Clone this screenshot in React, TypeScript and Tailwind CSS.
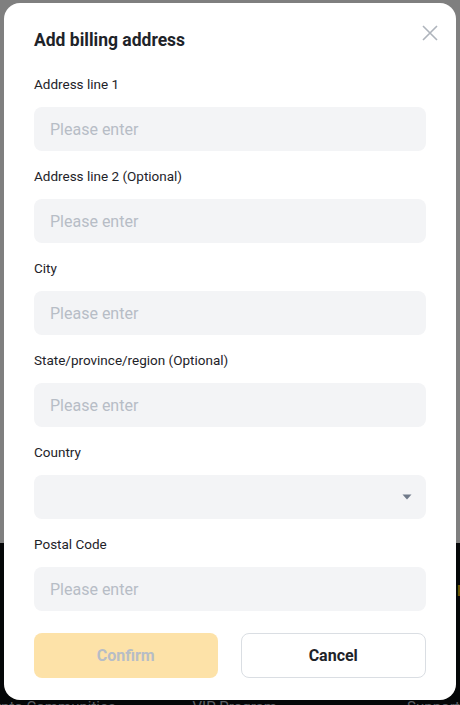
const fields = [
  { label: "Address line 1" },
  { label: "Address line 2 (Optional)" },
  { label: "City" },
  { label: "State/province/region (Optional)" },
  { label: "Country", select: true },
  { label: "Postal Code" },
];

export default function App() {
  return (
    <div className="relative h-[705px] w-[460px] overflow-hidden font-['Roboto',sans-serif]">
      {/* page behind the dialog */}
      <div className="flex h-full flex-col">
        <div className="h-[543px] shrink-0 bg-white" />
        <div className="flex-1 bg-[#0b0e11] pt-[38px] text-[14px] leading-[20px] text-[#b7bdc6]">
          <div className="flex justify-between">
            <span className="-ml-[10px] font-semibold text-[#f0b90b]">A</span>
            <span className="-mr-[6px] font-semibold text-[#f0b90b]">P</span>
          </div>
          <div className="mt-[22px] flex justify-between">
            <span className="-ml-[8px]">t</span>
            <span className="-mr-[8px]">b</span>
          </div>
          <div className="mt-[18px] flex justify-between">
            <span className="-ml-[8px]">r</span>
            <span className="-mr-[8px]">o</span>
          </div>
          <div className="mt-[16px] flex text-[15px]">
            <span className="-ml-[6px] w-[211px]">ypto Communities</span>
            <span className="w-[228px]">VIP Program</span>
            <span>Support</span>
          </div>
        </div>
      </div>

      {/* overlay */}
      <div className="absolute inset-0 bg-black/50" />

      {/* dialog */}
      <div className="absolute left-[4px] top-[3px] w-[452px] rounded-[16px] bg-white px-[30px] pb-[22px] pt-[25px]">
        <button className="absolute right-[18px] top-[22px] text-[#aeb4bc]">
          <svg width="16" height="16" viewBox="0 0 16 16" fill="none" stroke="currentColor" strokeWidth="1.6">
            <path d="M1 1 L15 15 M15 1 L1 15" />
          </svg>
        </button>
        <h2 className="text-[17.5px] font-bold leading-[24px] text-[#1e2329]">Add billing address</h2>

        <div className="mt-[22px] flex flex-col gap-[15px]">
          {fields.map((f) => (
            <div key={f.label} className="flex flex-col gap-[13px]">
              <label className="text-[13.5px] leading-[20px] text-[#1e2329]">{f.label}</label>
              {f.select ? (
                <div className="flex h-[44px] items-center justify-end rounded-[8px] bg-[#f3f4f6] pr-[14px]">
                  <svg width="10" height="6" viewBox="0 0 10 6">
                    <path d="M0.5 0.5 L9.5 0.5 L5 5.5 Z" fill="#707a8a" />
                  </svg>
                </div>
              ) : (
                <input
                  placeholder="Please enter"
                  className="h-[44px] rounded-[8px] bg-[#f3f4f6] px-[16px] text-[16px] text-[#1e2329] outline-none placeholder:text-[#b7bdc6]"
                />
              )}
            </div>
          ))}
        </div>

        <div className="mt-[22px] flex gap-[23px]">
          <button className="h-[45px] flex-1 rounded-[8px] bg-[#fde2a8] text-[16px] font-bold text-[#b7bdc6]">
            Confirm
          </button>
          <button className="h-[45px] flex-1 rounded-[8px] border border-[#dadee3] bg-white text-[16px] font-bold text-[#1e2329]">
            Cancel
          </button>
        </div>
      </div>
    </div>
  );
}
